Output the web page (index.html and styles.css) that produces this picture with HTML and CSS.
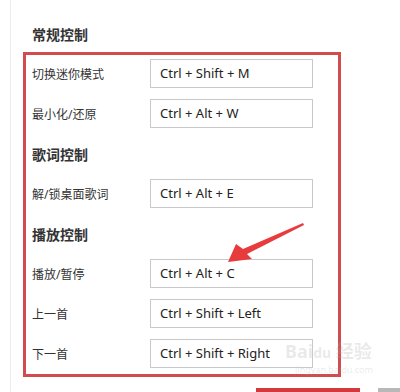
FILE: index.html
```html
<!DOCTYPE html>
<html lang="zh-CN">
<head>
    <meta charset="UTF-8">
    <meta name="viewport" content="width=device-width, initial-scale=1.0">
    <title>热键设置</title>
    <link rel="stylesheet" href="styles.css">
</head>
<body>
    <div class="panel">
        <h3 class="group-title first">常规控制</h3>
        <div class="highlight">
            <div class="row">
                <span class="label">切换迷你模式</span>
                <div class="hotkey">Ctrl + Shift + M</div>
            </div>
            <div class="row">
                <span class="label">最小化/还原</span>
                <div class="hotkey">Ctrl + Alt + W</div>
            </div>
            <h3 class="group-title">歌词控制</h3>
            <div class="row">
                <span class="label">解/锁桌面歌词</span>
                <div class="hotkey">Ctrl + Alt + E</div>
            </div>
            <h3 class="group-title">播放控制</h3>
            <div class="row">
                <span class="label">播放/暂停</span>
                <div class="hotkey">Ctrl + Alt + C</div>
            </div>
            <div class="row">
                <span class="label">上一首</span>
                <div class="hotkey">Ctrl + Shift + Left</div>
            </div>
            <div class="row">
                <span class="label">下一首</span>
                <div class="hotkey">Ctrl + Shift + Right</div>
            </div>
        </div>
        <div class="actions">
            <button class="btn-save" aria-label="保存"></button>
            <button class="btn-reset" aria-label="恢复默认"></button>
        </div>
    </div>

    <svg class="arrow" width="400" height="392" viewBox="0 0 400 392">
        <polygon points="228,262 236,244 243,249 303,223 304,225 247,254 252,259" fill="#e83b3d"/>
    </svg>

    <div class="watermark">
        <span class="wm-logo">Bai<span class="wm-paw">du</span> 经验</span>
        <span class="wm-url">jingyan.baidu.com</span>
    </div>
</body>
</html>
```

FILE: styles.css
```css
body {
    margin: 0;
    padding: 0;
    background: #fff;
    font-family: "Noto Sans", "Noto Sans CJK SC", sans-serif;
    color: #333;
    height: 392px;
    overflow: hidden;
    position: relative;
}
.panel {
    margin-left: 10px;
    border-left: 1px solid #ececec;
    padding: 25px 0 0 12px;
    height: 367px;
    overflow: hidden;
}
.group-title {
    margin: 0 0 8px 0;
    font-size: 14px;
    font-weight: bold;
    line-height: 32px;
    color: #333;
}
.group-title.first {
    margin: -6px 0 1px 0;
    padding-left: 9px;
}
.highlight {
    width: 306px;
    border: 3px solid #d24b4e;
    padding: 4px 0 0 6px;
}
.row {
    display: flex;
    align-items: center;
    height: 29px;
    margin-bottom: 11px;
}
.row:last-child {
    margin-bottom: 6px;
}
.label {
    width: 118px;
    font-size: 12px;
    color: #333;
}
.hotkey {
    width: 152px;
    height: 27px;
    border: 1px solid #c9c9c9;
    padding-left: 9px;
    line-height: 27px;
    font-size: 13px;
    color: #222;
}
.actions {
    display: flex;
    margin-top: 11px;
    padding-left: 233px;
}
.actions button {
    flex-shrink: 0;
    height: 30px;
    border: none;
    padding: 0;
}
.btn-save {
    width: 104px;
    background: #d2393d;
}
.btn-reset {
    width: 60px;
    margin-left: 18px;
    background: #b8b8b8;
}
.arrow {
    position: absolute;
    left: 0;
    top: 0;
    pointer-events: none;
}
.watermark {
    position: absolute;
    left: 285px;
    top: 340px;
    display: flex;
    flex-direction: column;
    color: rgba(170, 170, 170, 0.25);
    pointer-events: none;
}
.wm-logo {
    font-size: 18px;
    font-weight: bold;
    line-height: 22px;
}
.wm-paw {
    font-size: 14px;
}
.wm-url {
    font-size: 9px;
    line-height: 12px;
    margin-left: 10px;
}
```
